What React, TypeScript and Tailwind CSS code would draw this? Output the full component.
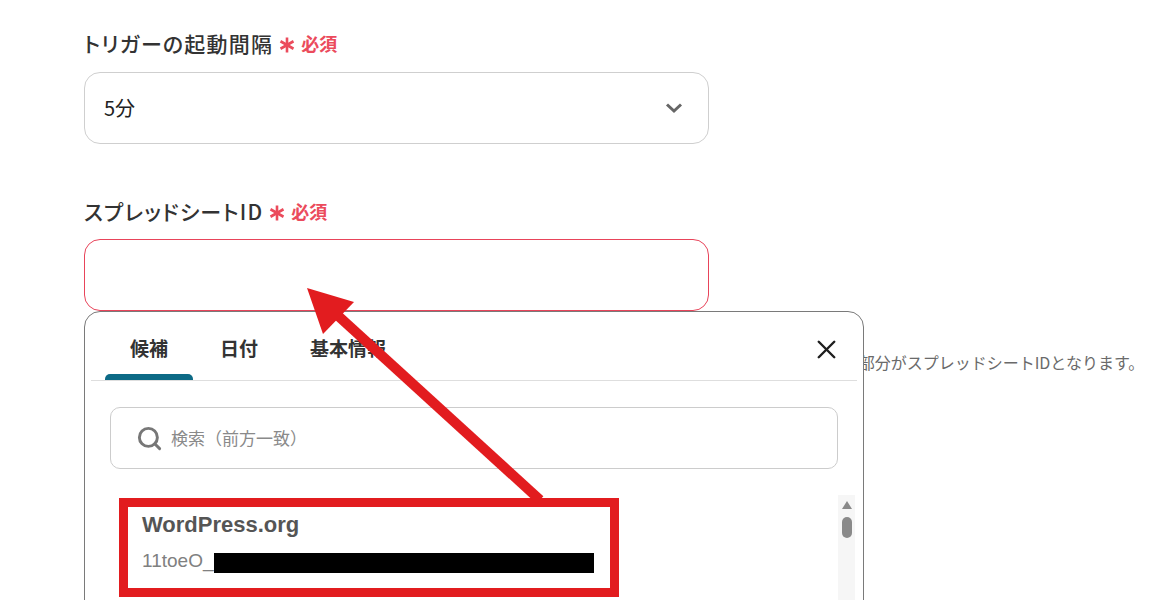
import { Search, X } from "lucide-react";

const jp = "[font-family:'Noto_Sans_CJK_JP','Noto_Sans',sans-serif]";

const Required = () => (
  <span className="ml-[6px] flex items-center">
    <svg width="16" height="16" viewBox="0 0 16 16" className="mt-[3px]">
      <g stroke="#eb4b5c" strokeWidth="2.6" strokeLinecap="butt">
        <line x1="8" y1="0.5" x2="8" y2="15.5" />
        <line x1="1.5" y1="4.25" x2="14.5" y2="11.75" />
        <line x1="1.5" y1="11.75" x2="14.5" y2="4.25" />
      </g>
    </svg>
    <span className="ml-[6px] text-[18px] font-bold tracking-normal text-[#eb4b5c]">必須</span>
  </span>
);

const FieldLabel = ({ text }: { text: string }) => (
  <div className="flex h-[30px] items-center text-[21px] font-medium leading-[30px] tracking-[1.2px] text-[#333] [font-feature-settings:'palt']">
    <span>{text}</span>
    <Required />
  </div>
);

const tabs = ["候補", "日付", "基本情報"];

const Popover = () => (
  <div className="absolute left-0 top-full z-10 h-[340px] w-[780px] rounded-t-[16px] border border-[#7a7a7a] bg-white">
    {/* tabs */}
    <div className="mx-[6px] flex border-b border-[#dedede]">
      <div className="flex gap-[2px] pl-[14px]">
        {tabs.map((t, i) => (
          <div key={t} className="flex flex-col">
            <div className="px-[25px] pt-[23px] text-[19px] font-bold leading-[26px] text-[#333]">
              {t}
            </div>
            <div
              className={
                "mt-[13px] h-[6px] rounded-t-[5px] " +
                (i === 0 ? "bg-[#0d6a86]" : "bg-transparent")
              }
            />
          </div>
        ))}
      </div>
      <div className="ml-auto mr-[15px] mt-[22px]">
        <X size={31} strokeWidth={1.9} color="#1f1f1f" />
      </div>
    </div>

    {/* search */}
    <div className="mx-[25px] mt-[26px] flex h-[62px] items-center rounded-[10px] border border-[#cccccc] pl-[25px]">
      <Search size={27} strokeWidth={2.6} color="#777" />
      <span className="ml-[8px] text-[17px] text-[#8a8a8a]">検索（前方一致）</span>
    </div>

    {/* list */}
    <div className="mt-[26px] flex">
      <div className="flex-1 pl-[57px] pt-[16px] [font-family:'Liberation_Sans',Arial,sans-serif]">
        <div className="text-[22px] font-bold leading-[28px] text-[#555]">WordPress.org</div>
        <div className="mt-[10px] flex items-center text-[19px] leading-[24px] text-[#808080]">
          <span>11toeO_</span>
          <span className="ml-[1px] mt-[3px] inline-block h-[20px] w-[380px] bg-black" />
        </div>
      </div>
      <div className="mr-[8px] flex h-[110px] w-[17px] flex-col items-center bg-[#f6f6f6] pt-[6px]">
        <div className="h-0 w-0 border-x-[5px] border-b-[8px] border-x-transparent border-b-[#8a8a8a]" />
        <div className="mt-[8px] h-[21px] w-[10px] rounded-full bg-[#8a8a8a]" />
      </div>
    </div>
  </div>
);

export default function App() {
  return (
    <div className={"relative h-[600px] w-[1170px] overflow-hidden bg-white " + jp}>
      <div className="pl-[84px] pt-[28px]">
        <FieldLabel text="トリガーの起動間隔" />
        <div className="mt-[14px] flex h-[72px] w-[625px] items-center justify-between rounded-[16px] border border-[#cfcfcf] pl-[19px] pr-[24px]">
          <span className="text-[20px] text-[#222]">5分</span>
          <svg width="20" height="14" viewBox="0 0 20 14">
            <polyline points="3,3.5 10,10 17,3.5" fill="none" stroke="#666" strokeWidth="3" />
          </svg>
        </div>

        <div className="mt-[52px]">
          <FieldLabel text="スプレッドシートID" />
        </div>
        <div className="relative mt-[13px] w-[625px]">
          <div className="h-[72px] rounded-[16px] border border-[#e8445a]" />
          <Popover />
        </div>
        <p className="mt-[40px] whitespace-nowrap text-[16px] leading-[22px] text-[#6a6a6a]">
          スプレッドシートを開いたURL「https://docs.google.com/spreadsheets/d/●●●●●/edit」の●●●●の部分がスプレッドシートIDとなります。
        </p>
      </div>

      {/* annotations */}
      <svg className="pointer-events-none absolute left-0 top-0 z-20" width="1170" height="600">
        <rect x="123.5" y="502.5" width="491" height="90" fill="none" stroke="#e21c1f" strokeWidth="9" />
        <line x1="540" y1="500" x2="335" y2="313" stroke="#e21c1f" strokeWidth="10" />
        <polygon points="307,288 354,302 323,334" fill="#e21c1f" />
      </svg>
    </div>
  );
}
